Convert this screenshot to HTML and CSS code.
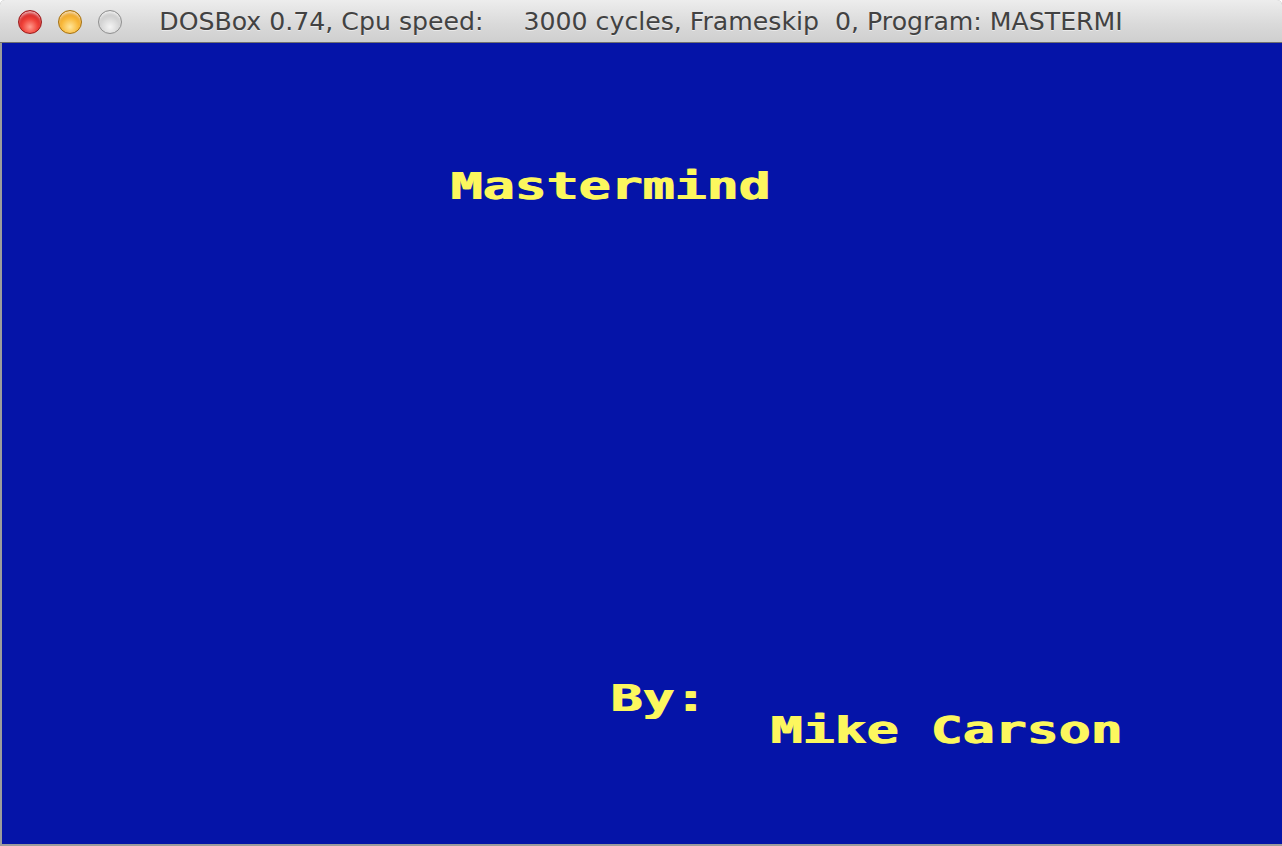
FILE: index.html
```html
<!DOCTYPE html>
<html>
<head>
<meta charset="utf-8">
<title>DOSBox</title>
<link rel="stylesheet" href="styles.css">
</head>
<body>
<div class="window">
  <div class="titlebar">
    <div class="lights">
      <span class="light red"></span>
      <span class="light yellow"></span>
      <span class="light gray"></span>
    </div>
    <div class="title">DOSBox 0.74, Cpu speed:     3000 cycles, Frameskip  0, Program: MASTERMI</div>
    <div class="spacer"></div>
  </div>
  <div class="frame">
    <div class="screen"><pre class="text">




              Mastermind















                   By:
                        Mike Carson</pre></div>
  </div>
</div>
</body>
</html>
```
FILE: styles.css
```css
html, body {
  margin: 0;
  padding: 0;
  background: #ffffff;
}

.window {
  width: 1282px;
  height: 846px;
  display: flex;
  flex-direction: column;
  background: #9c9c9c;
  border-radius: 5px 5px 0 0;
  overflow: hidden;
}

.titlebar {
  height: 42px;
  flex: none;
  display: grid;
  grid-template-columns: 1fr auto 1fr;
  align-items: center;
  background: linear-gradient(#ededed, #d9d9d9 60%, #cfcfcf);
  border-bottom: 1px solid #6f6f6f;
  box-sizing: content-box;
}

.lights {
  display: flex;
  gap: 16px;
  padding-left: 18px;
  padding-top: 2px;
}

.light {
  width: 24px;
  height: 24px;
  border-radius: 50%;
  box-sizing: border-box;
}

.light.red {
  border: 1px solid #9b1a1a;
  background: radial-gradient(circle at 50% 72%, #ff9b8e 0%, #f0443a 40%, #c8161a 80%, #a50f14 100%);
  box-shadow: inset 0 3px 3px -1px rgba(255,255,255,0.7);
}

.light.yellow {
  border: 1px solid #a5700e;
  background: radial-gradient(circle at 50% 72%, #ffe69a 0%, #f8b83a 45%, #e09418 85%, #c47c0e 100%);
  box-shadow: inset 0 3px 3px -1px rgba(255,255,255,0.7);
}

.light.gray {
  border: 1px solid #8f8f8f;
  background: radial-gradient(circle at 50% 72%, #f4f4f4 0%, #d4d4d4 50%, #b8b8b8 100%);
  box-shadow: inset 0 3px 3px -1px rgba(255,255,255,0.8);
}

.title {
  font-family: "DejaVu Sans", sans-serif;
  font-size: 25.2px;
  color: #424242;
  white-space: pre;
  padding-top: 1px;
  text-shadow: 0 1px 0 rgba(255,255,255,0.5);
}

.frame {
  flex: 1;
  padding: 0 0 2px 2px;
}

.screen {
  width: 1280px;
  height: 801px;
  background: #0514a8;
  overflow: hidden;
}

.text {
  margin: -1px 0 0 0;
  font-family: "DejaVu Sans Mono", monospace;
  font-weight: bold;
  font-size: 38px;
  line-height: 32px;
  color: #fcf75e;
  transform: scaleX(1.3987);
  transform-origin: 0 0;
  text-shadow: 1px 0 0 #fcf75e;
}
```
